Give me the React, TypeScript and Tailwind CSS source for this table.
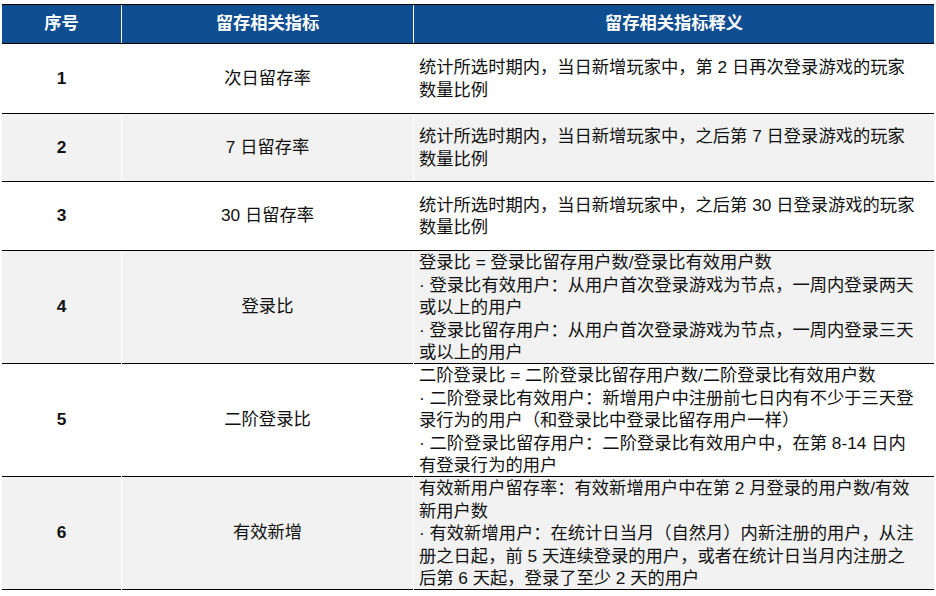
import React from "react"

type Row = {
  no: string
  name: string
  lines: string[]
  h: string
}

const rows: Row[] = [
  {
    no: "1",
    name: "次日留存率",
    h: "h-[70px]",
    lines: ["统计所选时期内，当日新增玩家中，第 2 日再次登录游戏的玩家", "数量比例"],
  },
  {
    no: "2",
    name: "7 日留存率",
    h: "h-[68px]",
    lines: ["统计所选时期内，当日新增玩家中，之后第 7 日登录游戏的玩家", "数量比例"],
  },
  {
    no: "3",
    name: "30 日留存率",
    h: "h-[69px]",
    lines: ["统计所选时期内，当日新增玩家中，之后第 30 日登录游戏的玩家", "数量比例"],
  },
  {
    no: "4",
    name: "登录比",
    h: "h-[113px]",
    lines: [
      "登录比 = 登录比留存用户数/登录比有效用户数",
      "· 登录比有效用户：从用户首次登录游戏为节点，一周内登录两天",
      "或以上的用户",
      "· 登录比留存用户：从用户首次登录游戏为节点，一周内登录三天",
      "或以上的用户",
    ],
  },
  {
    no: "5",
    name: "二阶登录比",
    h: "h-[113px]",
    lines: [
      "二阶登录比 = 二阶登录比留存用户数/二阶登录比有效用户数",
      "· 二阶登录比有效用户：新增用户中注册前七日内有不少于三天登",
      "录行为的用户（和登录比中登录比留存用户一样）",
      "· 二阶登录比留存用户：二阶登录比有效用户中，在第 8-14 日内",
      "有登录行为的用户",
    ],
  },
  {
    no: "6",
    name: "有效新增",
    h: "h-[113px]",
    lines: [
      "有效新用户留存率：有效新增用户中在第 2 月登录的用户数/有效",
      "新用户数",
      "· 有效新增用户：在统计日当月（自然月）内新注册的用户，从注",
      "册之日起，前 5 天连续登录的用户，或者在统计日当月内注册之",
      "后第 6 天起，登录了至少 2 天的用户",
    ],
  },
]

const App = () => {
  return (
    <div
      className="w-[936px] h-[596px] bg-white pt-1 pl-[2px] text-[17.3px] text-[#111]"
      style={{ fontFamily: '"Liberation Sans", "Noto Sans CJK SC", sans-serif' }}
    >
      <div className="w-[932px] border-t border-black">
        {/* header */}
        <div className="grid grid-cols-[119px_292px_521px] h-[39px] bg-[#0f4e91] border-b border-black text-white font-bold">
          <div className="flex items-center justify-center">序号</div>
          <div className="flex items-center justify-center border-l border-white">留存相关指标</div>
          <div className="flex items-center justify-center border-l border-white">留存相关指标释义</div>
        </div>

        {rows.map((r, i) => (
          <div
            key={r.no}
            className={`grid grid-cols-[119px_292px_521px] ${r.h} border-b border-black ${i % 2 === 1 ? "bg-[#f2f2f2]" : "bg-white"}`}
          >
            <div className="flex items-center justify-center font-bold">{r.no}</div>
            <div className="flex items-center justify-center border-l border-white">{r.name}</div>
            <div className="flex flex-col justify-center border-l border-white pl-[5px] leading-[22.5px]">
              {r.lines.map((l) => (
                <div key={l} className="whitespace-nowrap">{l}</div>
              ))}
            </div>
          </div>
        ))}
      </div>
    </div>
  )
}

export default App
